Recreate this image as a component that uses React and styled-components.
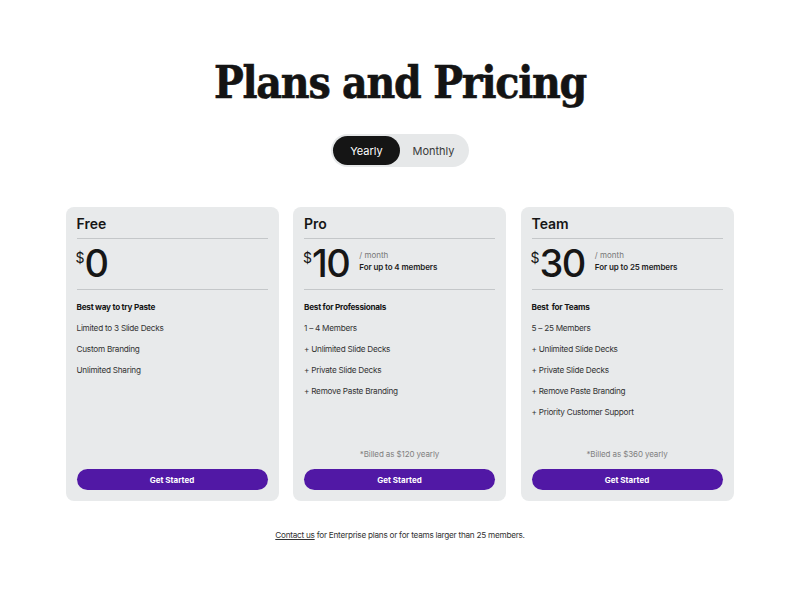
import React, { useState } from "react";
import styled, { createGlobalStyle } from "styled-components";

const Global = createGlobalStyle`
  html, body { margin: 0; padding: 0; background: #ffffff; }
  body { font-family: Inter, "Noto Sans", sans-serif; color: #161616; }
`;

const Page = styled.main`
  display: flex;
  flex-direction: column;
  align-items: center;
  padding-top: 58px;
`;

const Title = styled.h1`
  margin: 0;
  font-family: "DejaVu Serif Condensed", "DejaVu Serif", "Liberation Serif", serif;
  font-stretch: condensed;
  font-weight: 900;
  font-size: 44px;
  line-height: 50px;
  letter-spacing: -1.2px;
  color: #141414;
  -webkit-text-stroke: 0.6px #141414;
`;

const Toggle = styled.div`
  margin-top: 26px;
  display: flex;
  padding: 2px;
  background: #e6e8e9;
  border-radius: 999px;
`;

const ToggleBtn = styled.button`
  border: none;
  cursor: pointer;
  height: 29px;
  width: 67px;
  border-radius: 999px;
  font-family: Inter, sans-serif;
  font-size: 11px;
  background: ${(p) => (p.$active ? "#151515" : "transparent")};
  color: ${(p) => (p.$active ? "#ffffff" : "#3a3a3a")};
`;

const Cards = styled.section`
  margin-top: 40px;
  margin-left: -1px;
  display: grid;
  grid-template-columns: repeat(3, 213px);
  gap: 14.5px;
`;

const Card = styled.article`
  background: #e8eaeb;
  border-radius: 8px;
  padding: 8px 11px 11px;
  height: 294px;
  box-sizing: border-box;
  display: flex;
  flex-direction: column;
`;

const PlanName = styled.h2`
  margin: 0;
  font-size: 14px;
  font-weight: 600;
  line-height: 18px;
  padding-bottom: 5px;
  border-bottom: 1px solid #c4c7c9;
`;

const PriceRow = styled.div`
  display: flex;
  align-items: flex-start;
  height: 50px;
  border-bottom: 1px solid #c4c7c9;
`;

const Dollar = styled.span`
  font-size: 14px;
  margin-top: 10px;
  margin-left: -1px;
`;

const Amount = styled.span`
  font-size: 38px;
  font-weight: 500;
  letter-spacing: -1.5px;
  line-height: 50px;
  margin-top: -1px;
`;

const PriceMeta = styled.div`
  margin-left: 10px;
  margin-top: 11px;
  display: flex;
  flex-direction: column;
  gap: 2px;
`;

const Per = styled.span`
  font-size: 8px;
  color: #777;
`;

const Members = styled.span`
  font-size: 8px;
  font-weight: 600;
  color: #1d1d1d;
  letter-spacing: -0.1px;
`;

const Features = styled.ul`
  list-style: none;
  margin: 12px 0 0;
  padding: 0;
  display: flex;
  flex-direction: column;
  gap: 10px;
`;

const Feature = styled.li`
  font-size: 8.2px;
  line-height: 11px;
  letter-spacing: -0.25px;
  color: ${(p) => (p.$strong ? "#161616" : "#333")};
  font-weight: ${(p) => (p.$strong ? 700 : 400)};
  white-space: pre;
`;

const Bottom = styled.div`
  margin-top: auto;
  display: flex;
  flex-direction: column;
  align-items: center;
  gap: 10px;
`;

const Billed = styled.span`
  font-size: 8px;
  letter-spacing: -0.1px;
  color: #808080;
`;

const Cta = styled.button`
  width: 100%;
  height: 21px;
  border: none;
  border-radius: 999px;
  background: #5118a5;
  color: #fff;
  font-family: Inter, sans-serif;
  font-size: 8px;
  font-weight: 700;
  cursor: pointer;
`;

const Footer = styled.p`
  margin: 29px 0 0;
  font-size: 8.2px;
  letter-spacing: -0.25px;
  color: #333;
`;

const Link = styled.a`
  color: #333;
  text-decoration: underline;
`;

const plans = [
  {
    name: "Free",
    price: "0",
    features: ["Best way to try Paste", "Limited to 3 Slide Decks", "Custom Branding", "Unlimited Sharing"],
  },
  {
    name: "Pro",
    price: "10",
    members: "For up to 4 members",
    billed: "*Billed as $120 yearly",
    features: ["Best for Professionals", "1 – 4 Members", "+ Unlimited Slide Decks", "+ Private Slide Decks", "+ Remove Paste Branding"],
  },
  {
    name: "Team",
    price: "30",
    members: "For up to 25 members",
    billed: "*Billed as $360 yearly",
    features: ["Best  for Teams", "5 – 25 Members", "+ Unlimited Slide Decks", "+ Private Slide Decks", "+ Remove Paste Branding", "+ Priority Customer Support"],
  },
];

export default function App() {
  const [yearly, setYearly] = useState(true);
  return (
    <>
      <Global />
      <Page>
        <Title>Plans and Pricing</Title>
        <Toggle>
          <ToggleBtn $active={yearly} onClick={() => setYearly(true)}>Yearly</ToggleBtn>
          <ToggleBtn $active={!yearly} onClick={() => setYearly(false)}>Monthly</ToggleBtn>
        </Toggle>
        <Cards>
          {plans.map((p) => (
            <Card key={p.name}>
              <PlanName>{p.name}</PlanName>
              <PriceRow>
                <Dollar>$</Dollar>
                <Amount>{p.price}</Amount>
                {p.members && (
                  <PriceMeta>
                    <Per>/ month</Per>
                    <Members>{p.members}</Members>
                  </PriceMeta>
                )}
              </PriceRow>
              <Features>
                {p.features.map((f, i) => (
                  <Feature key={f} $strong={i === 0}>{f}</Feature>
                ))}
              </Features>
              <Bottom>
                {p.billed && <Billed>{p.billed}</Billed>}
                <Cta>Get Started</Cta>
              </Bottom>
            </Card>
          ))}
        </Cards>
        <Footer>
          <Link href="#">Contact us</Link> for Enterprise plans or for teams larger than 25 members.
        </Footer>
      </Page>
    </>
  );
}
